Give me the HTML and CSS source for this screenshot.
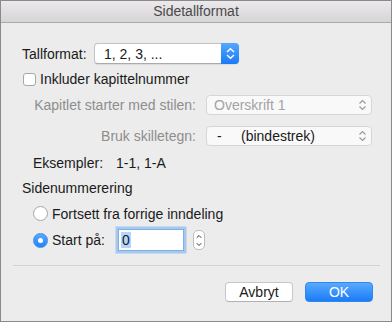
FILE: index.html
```html
<!DOCTYPE html>
<html>
<head>
<meta charset="utf-8">
<link rel="stylesheet" href="styles.css">
</head>
<body>
<div class="window">
  <div class="titlebar">Sidetallformat</div>
  <div class="content">
    <div class="row r1">
      <span class="lbl-fixed">Tallformat:</span>
      <div class="popup primary">
        <span class="ptext">1, 2, 3, ...</span>
        <span class="pstep blue">
          <svg width="17" height="19" viewBox="0 0 17 19"><path d="M5 8 L8.5 4.8 L12 8 M5 11 L8.5 14.2 L12 11" fill="none" stroke="#fff" stroke-width="1.5"/></svg>
        </span>
      </div>
    </div>
    <div class="row r2">
      <span class="checkbox"></span>
      <span class="cb-text">Inkluder kapittelnummer</span>
    </div>
    <div class="row r3">
      <span class="rlabel dim">Kapitlet starter med stilen:</span>
      <div class="popup disabled">
        <span class="ptext dim">Overskrift 1</span>
        <span class="pstep">
          <svg width="17" height="18" viewBox="0 0 17 18"><path d="M5.5 7.5 L8.5 4.5 L11.5 7.5 M5.5 10.5 L8.5 13.5 L11.5 10.5" fill="none" stroke="#9a9a9a" stroke-width="1.2"/></svg>
        </span>
      </div>
    </div>
    <div class="row r4">
      <span class="rlabel dim">Bruk skilletegn:</span>
      <div class="popup disabled">
        <span class="ptext dark"><span class="dash">-</span>(bindestrek)</span>
        <span class="pstep">
          <svg width="17" height="18" viewBox="0 0 17 18"><path d="M5.5 7.5 L8.5 4.5 L11.5 7.5 M5.5 10.5 L8.5 13.5 L11.5 10.5" fill="none" stroke="#9a9a9a" stroke-width="1.2"/></svg>
        </span>
      </div>
    </div>
    <div class="row r5">
      <span class="ex-label">Eksempler:</span>
      <span>1-1, 1-A</span>
    </div>
    <div class="row r6">Sidenummerering</div>
    <div class="row r7">
      <span class="radio"></span>
      <span class="radio-text">Fortsett fra forrige inndeling</span>
    </div>
    <div class="row r8">
      <span class="radio on"></span>
      <span class="radio-text start">Start på:</span>
      <span class="field"><span class="sel">0</span></span>
      <span class="stepper">
        <svg width="11" height="19" viewBox="0 0 11 19"><path d="M3 6.5 L5.5 4 L8 6.5 M3 12.5 L5.5 15 L8 12.5" fill="none" stroke="#333" stroke-width="1.1"/></svg>
      </span>
    </div>
    <div class="separator"></div>
    <div class="buttons">
      <span class="btn">Avbryt</span>
      <span class="btn ok">OK</span>
    </div>
  </div>
</div>
</body>
</html>
```

FILE: styles.css
```css
* { box-sizing: border-box; }
html, body { margin: 0; padding: 0; }
body {
  width: 392px;
  height: 322px;
  font-family: "Liberation Sans", Arial, sans-serif;
  font-size: 14px;
  color: #1a1a1a;
  background: #ececec;
}
.window {
  width: 392px;
  height: 322px;
  border: 1px solid #8a8a8a;
  background: #ececec;
  overflow: hidden;
}
.titlebar {
  height: 22px;
  border-bottom: 1px solid #a9a9a9;
  background: linear-gradient(#ebe9eb, #d6d4d6);
  text-align: center;
  line-height: 21px;
  color: #4a4a4a;
  font-size: 14px;
}
.content {
  padding-left: 21px;
}
.row {
  display: flex;
  align-items: center;
  white-space: nowrap;
}
.r1 { margin-top: 20px; height: 21px; }
.r2 { margin-top: 8px; height: 14px; }
.r3 { margin-top: 9px; height: 20px; }
.r4 { margin-top: 11px; height: 20px; }
.r5 { margin-top: 9px; height: 16px; padding-left: 11px; }
.r6 { margin-top: 9px; height: 16px; }
.r7 { margin-top: 10px; height: 15px; padding-left: 11px; }
.r8 { margin-top: 7px; height: 24px; padding-left: 11px; }

.lbl-fixed { width: 72px; }
.popup {
  display: flex;
  align-items: center;
  justify-content: space-between;
  border-radius: 4px;
  background: #fff;
}
.popup.primary {
  width: 145px;
  height: 21px;
  border: 1px solid #c4c4c4;
  border-bottom-color: #ababab;
  box-shadow: 0 0.5px 1px rgba(0,0,0,0.08);
}
.popup.disabled {
  width: 166px;
  height: 20px;
  border: 1px solid #d6d6d6;
  background: #f9f9f9;
}
.ptext { padding-left: 9px; }
.popup.disabled .ptext { padding-left: 7px; }
.dim { color: #8e8e8e; }
.ptext.dim { color: #a3a3a3; }
.dark { color: #1a1a1a; }
.dash { display: inline-block; width: 27px; padding-left: 3px; }
.pstep {
  display: flex;
  align-items: center;
  justify-content: center;
  width: 17px;
  height: 100%;
}
.pstep.blue {
  width: 18px;
  height: 21px;
  margin: -1px -1px -1px 0;
  border-radius: 0 4px 4px 0;
  background: linear-gradient(#55a7fd, #1a7bf7);
}
.checkbox {
  width: 13px;
  height: 13px;
  border: 1px solid #a8a8a8;
  border-radius: 3px;
  background: #fff;
  margin-left: 1px;
}
.cb-text { margin-left: 4px; }
.rlabel {
  width: 173px;
  text-align: right;
  margin-left: 1px;
  margin-right: 10px;
}
.ex-label { margin-right: 13px; }
.radio {
  width: 15px;
  height: 15px;
  border-radius: 50%;
  border: 1px solid #a5a5a5;
  background: #fff;
  display: flex;
  align-items: center;
  justify-content: center;
}
.radio.on {
  border-color: #3a8cf2;
  background: linear-gradient(#5aa9fc, #2283f6);
}
.radio.on::after {
  content: "";
  width: 5px;
  height: 5px;
  border-radius: 50%;
  background: #fff;
}
.radio-text { margin-left: 4px; }
.radio-text.start { width: 66px; }
.field {
  width: 66px;
  height: 22px;
  background: #fff;
  border: 1px solid #7fb0ea;
  box-shadow: 0 0 0 2.5px #a5c8f1;
  display: flex;
  align-items: center;
  padding-left: 2px;
}
.sel { background: #b4d5fe; padding: 0 1px; line-height: 16px; }
.stepper {
  margin-left: 9px;
  width: 12px;
  height: 20px;
  border: 1px solid #bcbcbc;
  border-radius: 5px;
  background: #fff;
  display: flex;
  align-items: center;
  justify-content: center;
}
.separator {
  margin-top: 13px;
  margin-left: -9px;
  width: 367px;
  height: 1px;
  background: #d2d2d2;
}
.buttons {
  margin-top: 16px;
  display: flex;
  justify-content: flex-end;
  gap: 12px;
  padding-right: 18px;
}
.btn {
  width: 68px;
  height: 20px;
  border: 1px solid #c6c6c6;
  border-bottom-color: #b0b0b0;
  border-radius: 4px;
  background: #fff;
  display: flex;
  align-items: center;
  justify-content: center;
  color: #1a1a1a;
}
.btn.ok {
  border-color: #2f86f6;
  background: linear-gradient(#59aafd, #1b7cf7);
  color: #fff;
}
```
